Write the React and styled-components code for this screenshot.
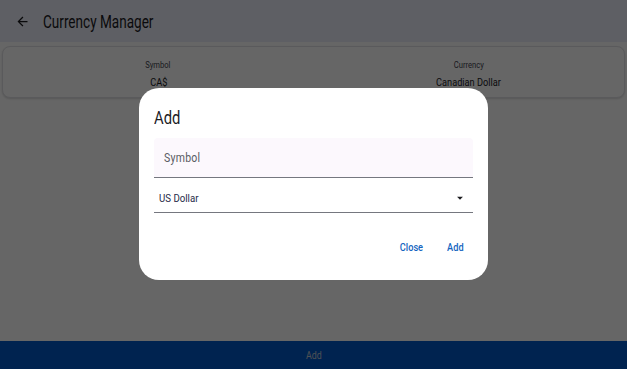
import React, { useState } from 'react';
import styled, { createGlobalStyle } from 'styled-components';

const GlobalStyle = createGlobalStyle`
	html, body {
		margin: 0;
		padding: 0;
		height: 100%;
	}
	body {
		font-family: Roboto, 'Liberation Sans', sans-serif;
		background: #ffffff;
		overflow: hidden;
	}
	#root {
		height: 100%;
	}
`;

// the screenshot's text is narrower than Roboto, so squeeze it sideways
const Squish = styled.span`
	display: inline-block;
	white-space: nowrap;
	transform: scaleX(${(p) => p.$s || 0.8});
	transform-origin: ${(p) => p.$origin || 'left'} center;
`;

const App = () => {
	const [currency] = useState('US Dollar');

	return (
		<>
			<GlobalStyle />
			<Page>
				<AppBar>
					<BackButton aria-label="back">
						<svg width="15" height="15" viewBox="0 0 24 24">
							<path d="M20 11H7.83l5.59-5.59L12 4l-8 8 8 8 1.41-1.41L7.83 13H20v-2z" fill="#1b1b1f" />
						</svg>
					</BackButton>
					<Title>
						<Squish $s={0.775}>Currency Manager</Squish>
					</Title>
				</AppBar>
				<Content>
					<CurrencyCard>
						<Column>
							<Label>
								<Squish $origin="center">Symbol</Squish>
							</Label>
							<Value>
								<Squish $origin="center">CA$</Squish>
							</Value>
						</Column>
						<Column>
							<Label>
								<Squish $origin="center">Currency</Squish>
							</Label>
							<Value>
								<Squish $origin="center">Canadian Dollar</Squish>
							</Value>
						</Column>
					</CurrencyCard>
				</Content>
				<BottomBar>
					<Squish $origin="center">Add</Squish>
				</BottomBar>
			</Page>

			<Scrim>
				<Dialog>
					<DialogTitle>
						<Squish>Add</Squish>
					</DialogTitle>
					<TextField>
						<Placeholder>
							<Squish $s={0.84}>Symbol</Squish>
						</Placeholder>
					</TextField>
					<SelectField>
						<SelectValue>
							<Squish $s={0.84}>{currency}</Squish>
						</SelectValue>
						<svg width="14" height="14" viewBox="0 0 24 24">
							<path d="M7 10l5 5 5-5z" fill="#1b1b1f" />
						</svg>
					</SelectField>
					<Actions>
						<TextButton>
							<Squish $origin="right">Close</Squish>
						</TextButton>
						<TextButton>
							<Squish $origin="right">Add</Squish>
						</TextButton>
					</Actions>
				</Dialog>
			</Scrim>
		</>
	);
};

export default App;

const Page = styled.div`
	display: flex;
	flex-direction: column;
	height: 100vh;
	background: #ffffff;
`;
const AppBar = styled.header`
	display: flex;
	align-items: center;
	height: 42px;
	padding: 1px 0 0 15px;
	box-sizing: border-box;
	background: #eceef9;
	flex-shrink: 0;
`;
const BackButton = styled.button`
	display: flex;
	align-items: center;
	justify-content: center;
	width: 15px;
	height: 18px;
	padding: 0;
	margin-right: 13px;
	border: none;
	background: none;
`;
const Title = styled.h1`
	margin: 0;
	font-size: 17.5px;
	font-weight: 400;
	color: #1b1b1f;
`;
const Content = styled.main`
	flex: 1;
	padding: 4px 2px;
`;
const CurrencyCard = styled.div`
	display: grid;
	grid-template-columns: 1fr 1fr;
	height: 52px;
	box-sizing: border-box;
	border: 1px solid #e2e2e6;
	border-radius: 8px;
	background: #fefeff;
	box-shadow: 0 1px 2px rgba(0, 0, 0, 0.15);
	padding-top: 12px;
`;
const Column = styled.div`
	display: flex;
	flex-direction: column;
	align-items: center;
	gap: 6px;
`;
const Label = styled.span`
	font-size: 9.5px;
	line-height: 11px;
	color: #44464f;
`;
const Value = styled.span`
	font-size: 11.5px;
	line-height: 13px;
	color: #1b1b1f;
`;
const BottomBar = styled.footer`
	display: flex;
	align-items: center;
	justify-content: center;
	height: 28px;
	background: #0058c9;
	color: #c4c8d2;
	font-size: 11px;
	flex-shrink: 0;
`;
const Scrim = styled.div`
	position: fixed;
	inset: 0;
	background: rgba(0, 0, 0, 0.6);
	display: flex;
	align-items: flex-start;
	justify-content: center;
	padding-top: 88px;
`;
const Dialog = styled.div`
	display: flex;
	flex-direction: column;
	width: 349px;
	height: 192px;
	box-sizing: border-box;
	padding: 18px 15px 0 15px;
	background: #ffffff;
	border-radius: 20px;
`;
const DialogTitle = styled.h2`
	margin: 0 0 8px 0;
	font-size: 18.5px;
	font-weight: 400;
	line-height: 24px;
	color: #1b1b1f;
`;
const TextField = styled.div`
	display: flex;
	align-items: center;
	height: 40px;
	box-sizing: border-box;
	padding: 0 10px;
	border-bottom: 1px solid #75777f;
	border-radius: 4px 4px 0 0;
	background: #fcf8fd;
`;
const Placeholder = styled.span`
	font-size: 12.5px;
	color: #5a5c63;
	letter-spacing: 0.3px;
`;
const SelectField = styled.div`
	display: flex;
	align-items: center;
	justify-content: space-between;
	height: 29px;
	margin-top: 5px;
	padding: 0 6px 0 5px;
	border-bottom: 1px solid #75777f;
`;
const SelectValue = styled.span`
	font-size: 11.5px;
	color: #1f2a48;
`;
const Actions = styled.div`
	display: flex;
	justify-content: flex-end;
	gap: 2px;
	margin-top: 21px;
	padding-right: 0;
`;
const TextButton = styled.button`
	padding: 6px 9px;
	border: none;
	background: none;
	font-family: Roboto, 'Liberation Sans', sans-serif;
	font-size: 11.5px;
	font-weight: 500;
	color: #1565c0;
`;
